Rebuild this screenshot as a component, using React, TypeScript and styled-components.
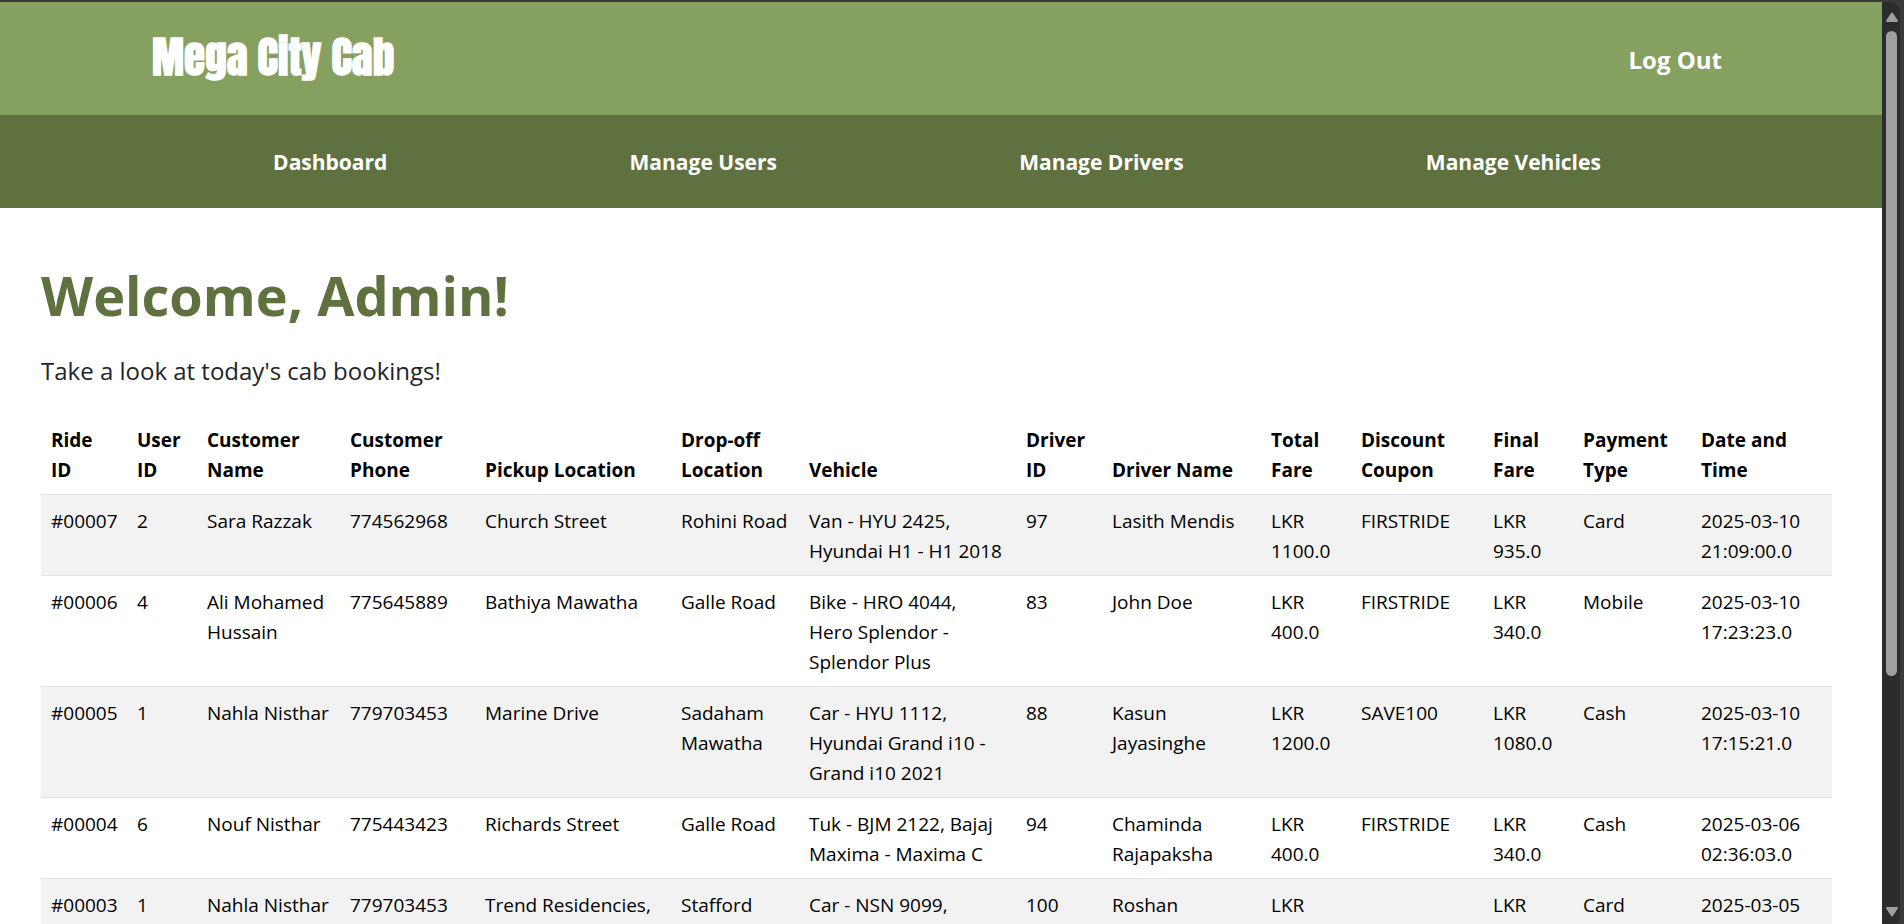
import React from "react";
import styled, { createGlobalStyle } from "styled-components";

const GlobalStyle = createGlobalStyle`
  *, *::before, *::after { box-sizing: border-box; }
  body {
    margin: 0;
    background: #3a3a3a;
    color: #212529;
    font-family: "Segoe UI", "Open Sans", "Noto Sans", sans-serif;
    font-size: 19px;
    line-height: 30px;
  }
`;

const Window = styled.div`
  display: flex;
  height: 100vh;
  padding: 2px 4px 0 0;
  overflow: hidden;
  background: #3a3a3a;
`;

const Page = styled.div`
  flex: 1;
  min-width: 0;
  overflow: hidden;
  background: #ffffff;
`;

const Header = styled.header`
  display: flex;
  align-items: center;
  justify-content: space-between;
  height: 113px;
  padding: 0 160px 0 152px;
  background: #86a15f;
`;

const Brand = styled.a`
  padding-bottom: 4px;
  color: #ffffff;
  font-family: Anton, Impact, "Liberation Sans", sans-serif;
  font-size: 43px;
  font-weight: 700;
  line-height: 54px;
  text-decoration: none;
`;

const LogOut = styled.button`
  padding: 2px 0 0;
  border: 0;
  background: none;
  color: #ffffff;
  font-family: inherit;
  font-size: 24px;
  font-weight: 700;
  line-height: 36px;
  cursor: pointer;
`;

const Nav = styled.nav`
  display: flex;
  align-items: center;
  justify-content: space-around;
  height: 93px;
  padding: 0 160px 0 152px;
  background: #607140;
`;

const NavLink = styled.a`
  color: #ffffff;
  font-size: 21px;
  font-weight: 700;
  text-decoration: none;
`;

const Main = styled.main`
  padding: 53px 50px 0 41px;
`;

const Title = styled.h1`
  margin: 0;
  color: #607140;
  font-size: 54px;
  font-weight: 700;
  line-height: 68px;
`;

const Lead = styled.p`
  margin: 24px 0 25px;
  font-size: 24px;
  line-height: 36px;
`;

const Table = styled.table`
  width: 100%;
  border-collapse: collapse;
  table-layout: fixed;
  color: #000000;
`;

const Col = styled.col<{ $width: number }>`
  width: ${(p) => p.$width}px;
`;

const HeadCell = styled.th`
  padding: 11px 0 9px 10px;
  border-bottom: 1px solid #dee2e6;
  text-align: left;
  vertical-align: bottom;
  white-space: pre-line;
`;

const Row = styled.tr`
  &:nth-child(odd) { background: #f2f2f2; }
`;

const Cell = styled.td`
  padding: 11px 0 9px 10px;
  border-bottom: 1px solid #dee2e6;
  vertical-align: top;
  white-space: pre-line;
`;

const Scrollbar = styled.div`
  display: flex;
  flex-direction: column;
  align-items: center;
  width: 18px;
  padding: 10px 0 7px 1px;
  border-top-right-radius: 10px;
  border-bottom-right-radius: 8px;
  background: #2c2c2c;
`;

const Track = styled.div`
  flex: 1;
  width: 11px;
  margin: 9px 0 4px;
`;

const Thumb = styled.div`
  height: 74%;
  border-radius: 6px;
  background: #9f9f9f;
`;

const Arrow = ({ down = false }: { down?: boolean }) => (
  <svg width="14" height="10" viewBox="0 0 14 10" aria-hidden="true">
    <path
      d={down ? "M2 1H12L7 8.5Z" : "M2 9H12L7 1.5Z"}
      fill="#9f9f9f"
      stroke="#9f9f9f"
      strokeWidth="2"
      strokeLinejoin="round"
    />
  </svg>
);

const columns = [
  { label: "Ride\nID", width: 86 },
  { label: "User\nID", width: 70 },
  { label: "Customer\nName", width: 143 },
  { label: "Customer\nPhone", width: 135 },
  { label: "Pickup Location", width: 196 },
  { label: "Drop-off\nLocation", width: 128 },
  { label: "Vehicle", width: 217 },
  { label: "Driver\nID", width: 86 },
  { label: "Driver Name", width: 159 },
  { label: "Total\nFare", width: 90 },
  { label: "Discount\nCoupon", width: 132 },
  { label: "Final\nFare", width: 90 },
  { label: "Payment\nType", width: 118 },
  { label: "Date and\nTime", width: 141 },
];

const bookings = [
  ["#00007", "2", "Sara Razzak", "774562968", "Church Street", "Rohini Road", "Van - HYU 2425,\nHyundai H1 - H1 2018", "97", "Lasith Mendis", "LKR\n1100.0", "FIRSTRIDE", "LKR\n935.0", "Card", "2025-03-10\n21:09:00.0"],
  ["#00006", "4", "Ali Mohamed\nHussain", "775645889", "Bathiya Mawatha", "Galle Road", "Bike - HRO 4044,\nHero Splendor -\nSplendor Plus", "83", "John Doe", "LKR\n400.0", "FIRSTRIDE", "LKR\n340.0", "Mobile", "2025-03-10\n17:23:23.0"],
  ["#00005", "1", "Nahla Nisthar", "779703453", "Marine Drive", "Sadaham\nMawatha", "Car - HYU 1112,\nHyundai Grand i10 -\nGrand i10 2021", "88", "Kasun\nJayasinghe", "LKR\n1200.0", "SAVE100", "LKR\n1080.0", "Cash", "2025-03-10\n17:15:21.0"],
  ["#00004", "6", "Nouf Nisthar", "775443423", "Richards Street", "Galle Road", "Tuk - BJM 2122, Bajaj\nMaxima - Maxima C", "94", "Chaminda\nRajapaksha", "LKR\n400.0", "FIRSTRIDE", "LKR\n340.0", "Cash", "2025-03-06\n02:36:03.0"],
  ["#00003", "1", "Nahla Nisthar", "779703453", "Trend Residencies,", "Stafford", "Car - NSN 9099,", "100", "Roshan", "LKR", "", "LKR", "Card", "2025-03-05"],
];

const links = ["Dashboard", "Manage Users", "Manage Drivers", "Manage Vehicles"];

export default function App() {
  return (
    <>
      <GlobalStyle />
      <Window>
        <Page>
          <Header>
            <Brand href="#">Mega City Cab</Brand>
            <LogOut type="button">Log Out</LogOut>
          </Header>
          <Nav>
            {links.map((link) => (
              <NavLink key={link} href="#">{link}</NavLink>
            ))}
          </Nav>
          <Main>
            <Title>Welcome, Admin!</Title>
            <Lead>Take a look at today's cab bookings!</Lead>
            <Table>
              <colgroup>
                {columns.map((c) => (
                  <Col key={c.label} $width={c.width} />
                ))}
              </colgroup>
              <thead>
                <tr>
                  {columns.map((c) => (
                    <HeadCell key={c.label} scope="col">{c.label}</HeadCell>
                  ))}
                </tr>
              </thead>
              <tbody>
                {bookings.map((b) => (
                  <Row key={b[0]}>
                    {b.map((value, i) => (
                      <Cell key={columns[i].label}>{value}</Cell>
                    ))}
                  </Row>
                ))}
              </tbody>
            </Table>
          </Main>
        </Page>
        <Scrollbar>
          <Arrow />
          <Track>
            <Thumb />
          </Track>
          <Arrow down />
        </Scrollbar>
      </Window>
    </>
  );
}
